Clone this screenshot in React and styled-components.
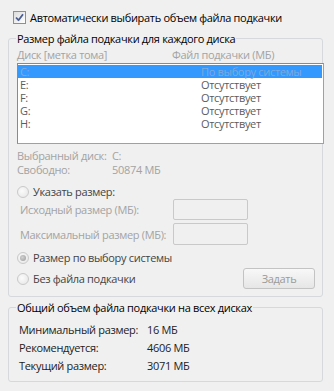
import React from "react";
import styled, { createGlobalStyle, css } from "styled-components";

const Global = createGlobalStyle`
  html, body { margin: 0; padding: 0; background: #f0f0f0; }
  body {
    font-family: "Open Sans", "Noto Sans", "DejaVu Sans", sans-serif;
    font-size: 11px;
    letter-spacing: -0.32px;
  }
`;

const Page = styled.div`
  width: 334px;
  height: 391px;
  background: #f0f0f0;
  box-sizing: border-box;
  padding-top: 10px;
  color: #000;
  overflow: hidden;
  white-space: nowrap;
`;

const CheckRow = styled.label`
  display: flex;
  align-items: center;
  gap: 4px;
  height: 15px;
  padding-left: 13px;
  line-height: 15px;
  color: #000;
`;

const CheckBox = styled.span`
  width: 13px;
  height: 13px;
  box-sizing: border-box;
  border: 1px solid #8f8f8f;
  background: linear-gradient(135deg, #dcdcdc, #ffffff);
  display: flex;
  align-items: center;
  justify-content: center;
  padding: 1px;
`;

const Group = styled.fieldset`
  margin: ${(p) => p.$mt || 0}px 0 0 8px;
  width: 315px;
  box-sizing: border-box;
  border: 1px solid #d5d9dc;
  border-radius: 3px;
  padding: 0 0 ${(p) => p.$pb || 0}px ${(p) => p.$pl || 8}px;
  min-width: 0;
`;

const Legend = styled.legend`
  margin-left: ${(p) => 7 - (p.$pl || 8)}px;
  padding: 0 1px;
  line-height: 15px;
  color: #000;
`;

const HeaderRow = styled.div`
  display: flex;
  height: 16px;
  line-height: 16px;
  color: #a3a3a3;
  margin-top: 1px;
`;

const HeadCell = styled.div`
  width: ${(p) => p.$w}px;
  flex: none;
`;

const ListBox = styled.div`
  width: 307px;
  height: 81px;
  box-sizing: border-box;
  border: 1px solid #8a8a8a;
  border-color: #8a8a8a #a0a0a0 #a0a0a0 #8a8a8a;
  background: #fff;
  padding: 1px 0 0 0;
`;

const ListRow = styled.div`
  display: flex;
  height: 13px;
  line-height: 13px;
  padding-left: 2px;
  margin-right: 1px;
  color: ${(p) => (p.$sel ? "#7ea9dc" : "#5c5c5c")};
  background: ${(p) => (p.$sel ? "#3399ff" : "transparent")};
`;

const ListCell = styled.div`
  width: ${(p) => p.$w}px;
  flex: none;
`;

const InfoRow = styled.div`
  display: flex;
  height: 14px;
  line-height: 14px;
  color: #a3a3a3;
  margin-top: ${(p) => p.$mt || 0}px;
`;

const InfoLabel = styled.div`
  width: ${(p) => p.$w}px;
  flex: none;
`;

const RadioRow = styled.div`
  display: flex;
  align-items: center;
  gap: 4px;
  height: 14px;
  margin-top: ${(p) => p.$mt || 0}px;
  color: #444;
  line-height: 14px;
`;

const Radio = styled.span`
  width: 12px;
  height: 12px;
  box-sizing: border-box;
  border-radius: 50%;
  border: 1px solid #c9c9c9;
  background: radial-gradient(circle at 40% 40%, #fbfbfb, #e4e4e4);
  display: flex;
  align-items: center;
  justify-content: center;
  ${(p) =>
    p.$on &&
    css`
      &::after {
        content: "";
        width: 6px;
        height: 6px;
        border-radius: 50%;
        background: radial-gradient(circle at 40% 40%, #d2d2d2, #9a9a9a);
      }
    `}
`;

const FieldRow = styled.div`
  display: flex;
  align-items: center;
  height: ${(p) => p.$h}px;
  margin-top: ${(p) => p.$mt || 0}px;
  padding-left: 3px;
  color: #a3a3a3;
`;

const FieldLabel = styled.div`
  width: 153px;
  flex: none;
`;

const Input = styled.div`
  width: 75px;
  height: ${(p) => p.$h}px;
  box-sizing: border-box;
  border: 1px solid #c9c9c9;
  border-radius: 2px;
  background: #f0f0f0;
`;

const LastRow = styled.div`
  display: flex;
  align-items: center;
  justify-content: space-between;
  height: 21px;
  margin-top: ${(p) => p.$mt || 0}px;
  padding-right: 7px;
`;

const Button = styled.button`
  width: 72px;
  height: 21px;
  box-sizing: border-box;
  border: 1px solid #c3c3c3;
  border-radius: 3px;
  background: linear-gradient(#f8f8f8, #efefef 50%, #e6e6e6);
  color: #9a9a9a;
  font: inherit;
  letter-spacing: inherit;
  padding: 0;
  text-align: center;
  line-height: 18px;
`;

const SumRow = styled.div`
  display: flex;
  height: 18px;
  line-height: 18px;
  color: #222;
  margin-top: ${(p) => p.$mt || 0}px;
`;

const SumLabel = styled.div`
  width: 128px;
  flex: none;
`;

const CheckMark = () => (
  <svg width="9" height="9" viewBox="0 0 9 9">
    <path d="M1 4.5 L3.5 7.2 L8 1.2" fill="none" stroke="#4a5e94" strokeWidth="1.8" strokeLinejoin="round" />
  </svg>
);

const disks = [
  ["C:", "По выбору системы", true],
  ["E:", "Отсутствует"],
  ["F:", "Отсутствует"],
  ["G:", "Отсутствует"],
  ["H:", "Отсутствует"],
];

export default function App() {
  return (
    <Page>
      <Global />
      <CheckRow>
        <CheckBox>
          <CheckMark />
        </CheckBox>
        Автоматически выбирать объем файла подкачки
      </CheckRow>

      <Group $mt={6} $pb={7} $pl={8}>
        <Legend $pl={8}>Размер файла подкачки для каждого диска</Legend>
        <HeaderRow>
          <HeadCell $w={155}>Диск [метка тома]</HeadCell>
          <HeadCell $w={150}>Файл подкачки (МБ)</HeadCell>
        </HeaderRow>
        <ListBox>
          {disks.map(([d, v, sel]) => (
            <ListRow key={d} $sel={sel}>
              <ListCell $w={181}>{d}</ListCell>
              <ListCell $w={120}>{v}</ListCell>
            </ListRow>
          ))}
        </ListBox>
        <InfoRow $mt={5}>
          <InfoLabel $w={95}>Выбранный диск:</InfoLabel>
          <div>C:</div>
        </InfoRow>
        <InfoRow>
          <InfoLabel $w={95}>Свободно:</InfoLabel>
          <div>50874 МБ</div>
        </InfoRow>
        <RadioRow $mt={8}>
          <Radio />
          Указать размер:
        </RadioRow>
        <FieldRow $h={22} $mt={-1}>
          <FieldLabel>Исходный размер (МБ):</FieldLabel>
          <Input $h={21} />
        </FieldRow>
        <FieldRow $h={22} $mt={3}>
          <FieldLabel>Максимальный размер (МБ):</FieldLabel>
          <Input $h={22} />
        </FieldRow>
        <RadioRow $mt={6}>
          <Radio $on />
          Размер по выбору системы
        </RadioRow>
        <LastRow $mt={3}>
          <RadioRow>
            <Radio />
            Без файла подкачки
          </RadioRow>
          <Button disabled>Задать</Button>
        </LastRow>
      </Group>

      <Group $mt={3} $pb={6} $pl={10}>
        <Legend $pl={10}>Общий объем файла подкачки на всех дисках</Legend>
        <SumRow $mt={6}>
          <SumLabel>Минимальный размер:</SumLabel>
          <div>16 МБ</div>
        </SumRow>
        <SumRow>
          <SumLabel>Рекомендуется:</SumLabel>
          <div>4606 МБ</div>
        </SumRow>
        <SumRow>
          <SumLabel>Текущий размер:</SumLabel>
          <div>3071 МБ</div>
        </SumRow>
      </Group>
    </Page>
  );
}
